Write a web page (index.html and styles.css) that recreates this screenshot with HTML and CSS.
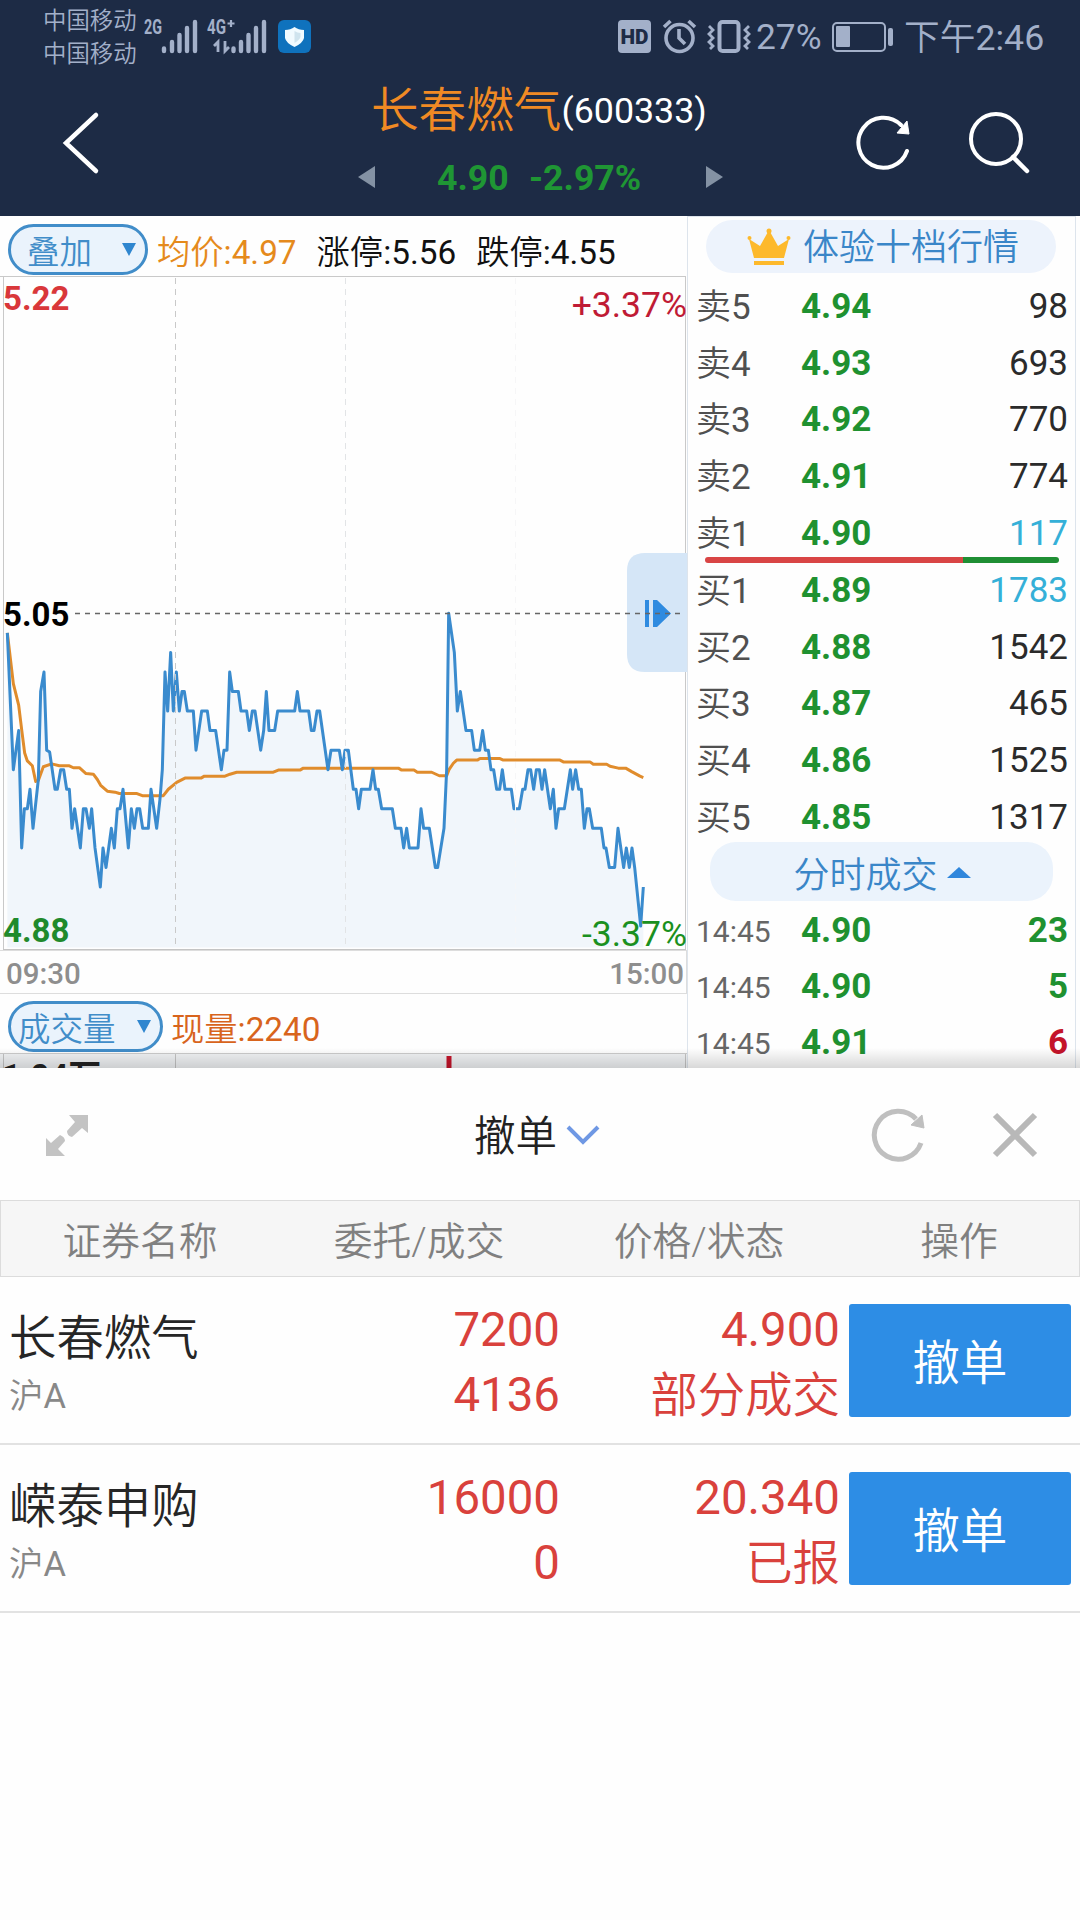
FILE: index.html
```html
<!DOCTYPE html>
<html lang="zh-CN">
<head>
    <meta charset="UTF-8">
    <meta name="viewport" content="width=device-width, initial-scale=1.0">
    <title>长春燃气(600333)</title>
    <link rel="stylesheet" href="styles.css">
</head>
<body>
<div class="status">
    <div class="carriers">
        <span>中国移动</span>
        <span>中国移动</span>
    </div>
    <svg class="signals" width="180" height="60" viewBox="138 0 180 60">
        <g fill="#a3b0c9">
            <text x="144" y="34" font-size="20" font-weight="700" textLength="18" lengthAdjust="spacingAndGlyphs">2G</text>
            <text x="207" y="34" font-size="20" font-weight="700" textLength="19" lengthAdjust="spacingAndGlyphs">4G</text>
        </g>
        <path d="M231 20v7M227.500 23.500h7" stroke="#a3b0c9" stroke-width="2.200"/>
        <g stroke="#a3b0c9" stroke-width="4.400" stroke-linecap="round">
            <path d="M164 48.500v2.500M172 42v9M179.500 35v16M187 28v23M195 22v29"/>
            <path d="M233.500 48.500v2.500M241 42v9M248.500 35v16M256 28v23M264 22v29"/>
        </g>
        <path d="M214 46l4-4v10M225 41v10l4-4" fill="none" stroke="#a3b0c9" stroke-width="2.800"/>
        <rect x="278" y="20" width="33" height="33" rx="6" fill="#0f72bd"/>
        <path d="M294.500 27q4 3 9.500 3v8q-1 5-9.500 9-8.500-4-9.500-9v-8q5.500 0 9.500-3z" fill="#f1fbff"/>
        <path d="M294.500 31v12q5-3 6-6v-4q-3 0-6-2z" fill="#cfe4ee"/>
    </svg>
    <svg class="device" width="142" height="60" viewBox="614 0 142 60">
        <rect x="618" y="20" width="33" height="33" rx="4" fill="#a3b0c9"/>
        <text x="620.500" y="44" font-size="21" font-weight="900" fill="#1d2b45" textLength="28" lengthAdjust="spacingAndGlyphs">HD</text>
        <g fill="none" stroke="#a3b0c9" stroke-width="3.600">
            <circle cx="679.500" cy="38" r="13.500"/>
            <path d="M679 29v9l6 6M664 27l6.500-6M695 27l-6.500-6"/>
            <rect x="719.500" y="22" width="19" height="29" rx="3" stroke-width="4"/>
            <path d="M709 26l4 4-4 4 4 4-4 4 4 4-3 3M749 26l-4 4 4 4-4 4 4 4-4 4 3 3" stroke-width="2.800"/>
        </g>
    </svg>
    <span class="percent">27%</span>
    <svg class="battery" width="62" height="30" viewBox="0 0 62 30">
        <rect x="1" y="1" width="52" height="28" rx="4" fill="none" stroke="#a3b0c9" stroke-width="2"/>
        <rect x="4" y="4" width="14" height="21" rx="1" fill="#a3b0c9"/>
        <rect x="56" y="6" width="5" height="18" rx="2" fill="#a3b0c9"/>
    </svg>
    <span class="clock">下午<span class="num">2:46</span></span>
</div>

<header class="header">
    <svg class="back" width="40" height="64" viewBox="0 0 40 64">
        <path d="M35 4L5 32l30 28" fill="none" stroke="#fff" stroke-width="4.500" stroke-linecap="round"/>
    </svg>
    <div class="stock">
        <div class="stock-name">长春燃气<span class="code">(600333)</span></div>
        <div class="stock-price">
            <svg width="17" height="22" viewBox="0 0 17 22"><path d="M17 0v22L0 11z" fill="#8492a4"/></svg>
            <span class="last">4.90</span>
            <span class="change">-2.97%</span>
            <svg width="17" height="22" viewBox="0 0 17 22"><path d="M0 0v22l17-11z" fill="#8492a4"/></svg>
        </div>
    </div>
    <svg class="refresh" width="60" height="60" viewBox="-30 -30 60 60">
        <path d="M24 9A25 25 0 1 1 18-17" fill="none" stroke="#fff" stroke-width="4" stroke-linecap="round"/>
        <path d="M24-21l2 13-12-1z" fill="#fff" stroke="#fff"/>
    </svg>
    <svg class="search" width="64" height="64" viewBox="0 0 64 64">
        <circle cx="28" cy="28" r="25" fill="none" stroke="#fff" stroke-width="4"/>
        <path d="M45 46l14 14" stroke="#fff" stroke-width="4.500" stroke-linecap="round"/>
    </svg>
</header>

<main class="quote">
    <section class="trend">
        <div class="info">
            <span class="pill overlay">叠加<i class="caret"></i></span>
            <span class="avg">均价<span class="num">:4.97</span></span>
            <span>涨停<span class="num">:5.56</span></span>
            <span>跌停<span class="num">:4.55</span></span>
        </div>
        <div class="chart">
            <svg width="687" height="674" viewBox="0 276 687 674">
                <!-- x: three units per pixel, y: one unit per 0.01 below 5.05 -->
                <g transform="translate(0 613.300) scale(.33333 19.550)">
                    <polygon class="area" points="22,17.1 22,1 40,8 56,6 65,12 73,10 82,10 90,9 99,11 115,8.5 122,4 132,3 140,7 149,7.1 165,9 172,9 182,8 191,8 200,9 208,9 216,11 224,10 241,12 250,10 258,10 268,11 275,10 285,12 301,14 309,12 318,13 334,11 343,12 352,10 360,10 369,9 385,12 394,10 403,11 411,10 419,10 428,11 445,11 453,9 470,11 480,9.5 487,8 495,3 503,5 512,2 520,5 529,3 538,5 546,4 553,4 562,5 580,5 588,7 605,5 622,5 630,6 647,6 664,8 672,7 681,7 689,3 697,4 715,4 723,5 740,5 748,6 757,5 765,5 782,7 791,6 799,4 807,6 824,6 833,5 884,5 892,4 900,5 926,5 934,6 942,6 951,5 959,5 984,8 993,7 1018,7 1027,8 1035,7 1045,7 1060,9 1068,9 1076,10 1084,9 1110,9 1119,8 1127,9 1135,9 1145,10 1177,10 1186,11 1203,11 1211,12 1220,11 1228,12 1254,12 1263,10 1271,11 1288,11 1306,13 1313,13 1332,11 1340,8 1346,0 1363,2 1372,5 1381,4 1398,6 1415,6 1423,7 1439,7 1448,6 1456,7 1465,7 1473,8 1481,8 1490,9 1499,9 1507,8 1515,9 1534,9 1542,10 1558,10 1568,9 1575,9 1584,8 1592,8 1601,9 1609,8 1618,8 1626,9 1634,8 1651,10 1660,9 1668,11 1676,10 1693,10 1711,8 1718,9 1727,8 1736,9 1744,9 1753,11 1761,10 1768,10 1778,11 1804,11 1812,12 1818,12 1828,13 1844,13 1854,11 1871,13 1879,12 1888,13 1896,12 1904,13 1922,16 1930,14 1930,17.1"/>
                    <polyline class="line average" points="22,1 40,3.6 56,4.7 65,5.95 74,7.15 82,7.55 97,7.8 107,8.6 115,8.55 130,7.85 155,7.7 178,7.8 208,7.8 220,7.9 238,7.9 258,8.2 280,8.23 292,8.5 302,8.8 322,9.1 345,9.15 358,9.22 411,9.22 427,9.33 490,9.33 505,9 530,8.65 555,8.43 603,8.43 613,8.33 675,8.33 690,8.23 710,8.13 820,8.13 835,8.02 900,8.02 910,7.92 1195,7.92 1205,8.02 1242,8.02 1252,8.13 1295,8.13 1318,8.31 1340,8.31 1347,8 1360,7.67 1370,7.51 1432,7.51 1440,7.43 1500,7.43 1510,7.51 1680,7.51 1690,7.6 1770,7.6 1780,7.72 1820,7.72 1830,7.82 1855,7.92 1877,7.92 1895,8.1 1920,8.33 1930,8.4"/>
                    <polyline class="line price-line" points="22,1 40,8 56,6 65,12 73,10 82,10 90,9 99,11 115,8.5 122,4 132,3 140,7 149,7.1 165,9 172,9 182,8 191,8 200,9 208,9 216,11 224,10 241,12 250,10 258,10 268,11 275,10 285,12 301,14 309,12 318,13 334,11 343,12 352,10 360,10 369,9 385,12 394,10 403,11 411,10 419,10 428,11 445,11 453,9 470,11 480,9.5 487,8 495,3 503,5 512,2 520,5 529,3 538,5 546,4 553,4 562,5 580,5 588,7 605,5 622,5 630,6 647,6 664,8 672,7 681,7 689,3 697,4 715,4 723,5 740,5 748,6 757,5 765,5 782,7 791,6 799,4 807,6 824,6 833,5 884,5 892,4 900,5 926,5 934,6 942,6 951,5 959,5 984,8 993,7 1018,7 1027,8 1035,7 1045,7 1060,9 1068,9 1076,10 1084,9 1110,9 1119,8 1127,9 1135,9 1145,10 1177,10 1186,11 1203,11 1211,12 1220,11 1228,12 1254,12 1263,10 1271,11 1288,11 1306,13 1313,13 1332,11 1340,8 1346,0 1363,2 1372,5 1381,4 1398,6 1415,6 1423,7 1439,7 1448,6 1456,7 1465,7 1473,8 1481,8 1490,9 1499,9 1507,8 1515,9 1534,9 1542,10 1558,10 1568,9 1575,9 1584,8 1592,8 1601,9 1609,8 1618,8 1626,9 1634,8 1651,10 1660,9 1668,11 1676,10 1693,10 1711,8 1718,9 1727,8 1736,9 1744,9 1753,11 1761,10 1768,10 1778,11 1804,11 1812,12 1818,12 1828,13 1844,13 1854,11 1871,13 1879,12 1888,13 1896,12 1904,13 1922,16 1930,14"/>
                </g>
                <g fill="none" stroke="#c9c9c9">
                    <path d="M0 276.500h686" />
                    <path d="M3.500 276v674M685.500 276v674"/>
                    <path d="M175.500 278v668" stroke-dasharray="6 5"/>
                    <path d="M345.500 278v668" stroke="#e2e4e6" stroke-dasharray="6 5"/>
                    <path d="M515.500 278v668" stroke="#f6f6f7" stroke-dasharray="6 5"/>
                </g>
                <path d="M687 553h-42q-18 0-18 18v83q0 18 18 18h42z" fill="#d5e6f7"/>
                <path d="M645 600h4v27h-4zM653 600h4l14 13.500-14 13.500h-4z" fill="#2f8be0"/>
                <path d="M75 613.500h606" stroke="#666" stroke-width="1.400" stroke-dasharray="5 5"/>
                <path d="M3 949.500h683" stroke="#c4c4c4"/>
            </svg>
            <span class="mark top-left">5.22</span>
            <span class="mark top-right">+3.37%</span>
            <span class="mark middle">5.05</span>
            <span class="mark bottom-left">4.88</span>
            <span class="mark bottom-right">-3.37%</span>
        </div>
        <div class="times"><span>09:30</span><span>15:00</span></div>
        <div class="info volume-info">
            <span class="pill volume">成交量<i class="caret"></i></span>
            <span class="current">现量<span class="num">:2240</span></span>
        </div>
        <div class="volume-chart">
            <span>1.04万</span>
            <svg width="687" height="15" viewBox="0 0 687 15">
                <path d="M3.500 0v15M175.500 0v15M685.500 0v15" stroke="#c4c4c4"/>
                <path d="M449 2v13" stroke="#c4142a" stroke-width="5"/>
            </svg>
        </div>
    </section>

    <section class="book">
        <div class="depth">
            <svg width="44" height="40" viewBox="0 0 44 40">
                <path d="M7 31L2 12l11 7L22 3l9 16 11-7-5 19z" fill="#fdb92c"/>
                <path d="M7 36h30" stroke="#fdb92c" stroke-width="4"/>
                <circle cx="22" cy="4" r="2.500" fill="#fdb92c"/>
                <circle cx="2.500" cy="11" r="2" fill="#fdb92c"/>
                <circle cx="41.500" cy="11" r="2" fill="#fdb92c"/>
            </svg>
            <span>体验十档行情</span>
        </div>
        <div class="orders">
            <div class="order"><span>卖<span class="num">5</span></span><b>4.94</b><em>98</em></div>
            <div class="order"><span>卖<span class="num">4</span></span><b>4.93</b><em>693</em></div>
            <div class="order"><span>卖<span class="num">3</span></span><b>4.92</b><em>770</em></div>
            <div class="order"><span>卖<span class="num">2</span></span><b>4.91</b><em>774</em></div>
            <div class="order"><span>卖<span class="num">1</span></span><b>4.90</b><em class="changed">117</em></div>
            <div class="ratio"></div>
            <div class="order"><span>买<span class="num">1</span></span><b>4.89</b><em class="changed">1783</em></div>
            <div class="order"><span>买<span class="num">2</span></span><b>4.88</b><em>1542</em></div>
            <div class="order"><span>买<span class="num">3</span></span><b>4.87</b><em>465</em></div>
            <div class="order"><span>买<span class="num">4</span></span><b>4.86</b><em>1525</em></div>
            <div class="order"><span>买<span class="num">5</span></span><b>4.85</b><em>1317</em></div>
        </div>
        <div class="deals-title">分时成交<i></i></div>
        <div class="deals">
            <div class="order"><span>14:45</span><b>4.90</b><em class="sell">23</em></div>
            <div class="order"><span>14:45</span><b>4.90</b><em class="sell">5</em></div>
            <div class="order"><span>14:45</span><b>4.91</b><em class="buy">6</em></div>
        </div>
    </section>
    <div class="shade"></div>
</main>

<section class="panel">
    <div class="panel-head">
        <svg class="expand" width="44" height="44" viewBox="0 0 44 44">
            <path d="M24 2h19v18l-6-5-10 9q-5-1-5-6l8-9zM20 43H1V25l5 5 9-8q5 2 5 6l-7 8z" fill="#c3c3c3"/>
        </svg>
        <div class="panel-title"><span>撤单</span>
            <svg width="34" height="20" viewBox="0 0 34 20"><path d="M2 2l15 15L32 2" fill="none" stroke="#6f98e4" stroke-width="4"/></svg>
        </div>
        <svg class="reload" width="60" height="60" viewBox="-30 -30 60 60">
            <path d="M23 8A24 24 0 1 1 18-16" fill="none" stroke="#bfbfbf" stroke-width="5"/>
            <path d="M24-20l2 13-13-3z" fill="#bfbfbf" stroke="#bfbfbf"/>
        </svg>
        <svg class="close" width="46" height="46" viewBox="0 0 46 46">
            <path d="M3 3l40 40M43 3L3 43" stroke="#b8b8b8" stroke-width="6"/>
        </svg>
    </div>
    <div class="columns">
        <span>证券名称</span><span>委托/成交</span><span>价格/状态</span><span>操作</span>
    </div>
    <div class="entrust">
        <div class="name">长春燃气<small>沪<span class="num">A</span></small></div>
        <div class="values"><span>7200</span><span>4136</span></div>
        <div class="values"><span>4.900</span><span class="state">部分成交</span></div>
        <button>撤单</button>
    </div>
    <div class="entrust">
        <div class="name">嵘泰申购<small>沪<span class="num">A</span></small></div>
        <div class="values"><span>16000</span><span>0</span></div>
        <div class="values"><span>20.340</span><span class="state">已报</span></div>
        <button>撤单</button>
    </div>
</section>
</body>
</html>
```

FILE: styles.css
```css
* {
    box-sizing: border-box;
}
body {
    margin: 0;
    width: 1080px;
    height: 1920px;
    overflow: hidden;
    background: #fefefe;
    font-family: Roboto, "Noto Sans CJK SC", sans-serif;
    font-weight: 350;
    color: #222;
}
svg {
    display: block;
    flex: none;
}
i, em {
    font-style: normal;
}
.num {
    font-weight: 400;
}

/* status bar */
.status {
    display: flex;
    height: 72px;
    background: #1d2b45;
    color: #a3b0c9;
}
.carriers {
    display: flex;
    flex-direction: column;
    width: 138px;
    padding: 5px 0 0 43px;
    font-size: 23.4px;
    line-height: 33px;
    white-space: nowrap;
}
.device {
    margin-left: 296px;
}
.percent {
    width: 76px;
    font-size: 35.3px;
    font-weight: 400;
    line-height: 75px;
}
.battery {
    margin-top: 22px;
}
.clock {
    padding-left: 10px;
    font-size: 35.7px;
    line-height: 76px;
    white-space: nowrap;
}

/* title bar */
.header {
    display: flex;
    height: 144px;
    background: #1d2b45;
}
.back {
    margin: 39px 0 0 61px;
}
.stock {
    width: 481px;
    margin: 0 72px 0 199px;
    padding: 4px 0 0 71px;
}
.stock-name {
    height: 68px;
    line-height: 71px;
    font-size: 47.6px;
    color: #f08a24;
    white-space: nowrap;
}
.code {
    position: relative;
    top: -4px;
    font-size: 35.8px;
    font-weight: 400;
    color: #fff;
}
.stock-price {
    display: flex;
    align-items: center;
    height: 66px;
    margin-left: -13px;
    font-size: 35.7px;
    font-weight: 700;
    color: #1f9634;
}
.stock-price span {
    padding-top: 2px;
}
.last {
    width: 92px;
    margin-left: 62px;
}
.change {
    width: 177px;
}
.refresh {
    margin: 40px 0 0;
}
.search {
    margin: 39px 0 0 55px;
}

/* trend chart */
.quote {
    display: flex;
    position: relative;
    height: 852px;
    overflow: hidden;
}
.trend {
    width: 687px;
}
.info {
    display: flex;
    align-items: center;
    height: 60px;
    padding: 6px 0 0 8px;
    gap: 20px;
    font-size: 33.3px;
    color: #111;
    white-space: nowrap;
}
.pill {
    display: flex;
    align-items: center;
    justify-content: space-between;
    height: 51px;
    border: 3px solid #418dc9;
    border-radius: 26px;
    background: #eaf3fc;
    color: #418dc9;
    font-size: 32.5px;
}
.overlay {
    width: 140px;
    padding: 0 9px 0 16px;
    margin-right: -11px;
}
.volume {
    width: 155px;
    padding: 0 9px 0 7px;
    margin-right: -12px;
}
.caret {
    border: 7px solid transparent;
    border-top: 13px solid #2f86cf;
    border-bottom: 0;
}
.avg {
    color: #e58a1c;
}
.current {
    color: #d8641c;
}
.chart {
    position: relative;
    height: 674px;
}
.area {
    fill: #f1f6fb;
}
.line {
    fill: none;
    stroke-width: 3px;
    stroke-linejoin: round;
    vector-effect: non-scaling-stroke;
}
.average {
    stroke: #e08c2c;
}
.price-line {
    stroke: #3a8bce;
}
.mark {
    position: absolute;
    line-height: 40px;
    font-size: 33px;
    font-weight: 700;
}
.top-left {
    left: 3px;
    top: 3px;
    color: #d9373a;
}
.top-right {
    right: 0;
    top: 9px;
    font-size: 35.5px;
    font-weight: 400;
    color: #c01b35;
}
.middle {
    left: 3px;
    top: 319px;
    color: #000;
}
.bottom-left {
    left: 3px;
    top: 635px;
    color: #1f8a2c;
}
.bottom-right {
    right: 0;
    top: 638px;
    font-size: 35.5px;
    font-weight: 400;
    color: #1a9020;
}
.times {
    display: flex;
    justify-content: space-between;
    height: 44px;
    padding: 0 2px 0 6px;
    border: 1px solid #ddd;
    border-width: 1px 1px 1px 0;
    line-height: 47px;
    font-size: 29.5px;
    font-weight: 500;
    color: #8e8e8e;
}
.volume-info {
    height: 59px;
    padding-top: 5px;
}
.volume-chart {
    position: relative;
    height: 15px;
    border-top: 1px solid #ccc;
    background: #f1f3f5;
    overflow: hidden;
}
.volume-chart span {
    position: absolute;
    left: 2px;
    top: 4px;
    font-size: 33px;
    line-height: 38px;
    font-weight: 700;
}

/* order book */
.book {
    width: 389px;
    border: 1px solid #dde4ec;
    border-width: 1px 1px 0;
}
.depth {
    display: flex;
    align-items: center;
    width: 350px;
    height: 53px;
    margin: 3px 0 0 18px;
    padding-left: 41px;
    gap: 12px;
    border-radius: 27px;
    background: #edf3fc;
    font-size: 36px;
    line-height: 50px;
    color: #3a86c8;
    white-space: nowrap;
}
.depth span {
    margin-top: 3px;
}
.orders {
    position: relative;
    padding-top: 5px;
}
.order {
    display: grid;
    grid-template-columns: 105px 1fr 1fr;
    align-items: center;
    height: 56.8px;
    padding: 0 7px 0 8px;
    font-size: 35px;
}
.order > span {
    margin-top: -6px;
    font-size: 35px;
    color: #505050;
}
.order b {
    font-weight: 700;
    color: #1f9130;
}
.order em {
    text-align: right;
    font-weight: 400;
    color: #2b2b2b;
}
.order .changed {
    color: #35b0d8;
}
.ratio {
    position: absolute;
    left: 17px;
    top: 284px;
    width: 354px;
    height: 6px;
    border-radius: 3px;
    background: linear-gradient(90deg, #d94545 73%, #1f8f34 73%);
}
.deals-title {
    display: flex;
    align-items: center;
    justify-content: center;
    width: 343px;
    height: 59px;
    margin: -4px 0 0 22px;
    padding: 2px 0 0 1px;
    gap: 9px;
    border-radius: 26px;
    background: #ebf3fc;
    font-size: 36px;
    color: #3a86c8;
}
.deals-title i {
    border: 12px solid transparent;
    border-top: 0;
    border-bottom: 11px solid #2f86dc;
}
.deals {
    padding-top: 1px;
}
.deals .order {
    height: 56.3px;
}
.deals .order > span {
    margin-top: 2px;
    font-size: 30px;
    font-weight: 400;
    color: #666;
}
.deals .order em {
    font-weight: 700;
}
.deals .order .sell {
    color: #1f9130;
}
.deals .order .buy {
    color: #c4142a;
}
.shade {
    position: absolute;
    left: 0;
    right: 0;
    bottom: 0;
    height: 20px;
    background: linear-gradient(rgba(0, 0, 0, 0), rgba(0, 0, 0, 0.15));
}

/* cancel order panel */
.panel {
    background: #fefefe;
}
.panel-head {
    display: flex;
    align-items: center;
    height: 132px;
    padding: 2px 42px 0 45px;
}
.panel-title {
    display: flex;
    align-items: center;
    width: 394px;
    margin-left: 385px;
    gap: 9px;
    font-size: 41.5px;
}
.panel-title span {
    margin-top: -4px;
}
.close {
    margin-left: auto;
}
.columns {
    display: grid;
    grid-template-columns: 278px 280px 280px 240px;
    height: 77px;
    border: 1px solid #dcdcdc;
    background: #f6f6f6;
    line-height: 82px;
    text-align: center;
    font-size: 38.8px;
    color: #808080;
}
.entrust {
    display: grid;
    grid-template-columns: 280px 271px 280px 222px;
    height: 168px;
    padding-left: 9px;
    border-bottom: 2px solid #e2e2e2;
    font-size: 47.4px;
}
.name {
    display: flex;
    flex-direction: column;
    padding-top: 27px;
    line-height: 71px;
    color: #262626;
}
.name small {
    margin-top: -2px;
    font-size: 34.5px;
    line-height: 46px;
    color: #888;
}
.values {
    display: flex;
    flex-direction: column;
    padding-top: 21px;
    line-height: 65px;
    text-align: right;
    font-weight: 400;
    color: #d9413c;
}
.state {
    padding-top: 1px;
    font-weight: 350;
}
button {
    width: 222px;
    height: 113px;
    margin: 27px 0 0 9px;
    padding: 0 0 3px;
    border: 0;
    border-radius: 3px;
    background: #2d8de5;
    color: #fff;
    font: inherit;
}
```
